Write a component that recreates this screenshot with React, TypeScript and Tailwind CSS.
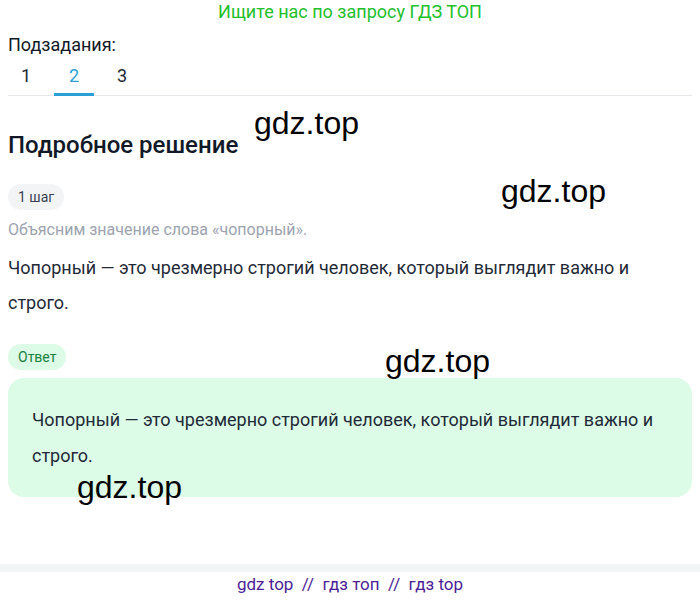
const FONT = "font-['Roboto',sans-serif]";

function Watermark({ className }: { className: string }) {
  return (
    <span className={`pointer-events-none absolute font-['Liberation_Sans',Arial,sans-serif] text-[32px] leading-none text-black ${className}`}>
      gdz.top
    </span>
  );
}

export default function App() {
  const tabs = ["1", "2", "3"];
  const active = "2";

  return (
    <div className={`relative min-h-[600px] w-[700px] bg-white ${FONT}`}>
      {/* Top banner */}
      <p className="text-center text-[18px] leading-[24px] text-[#22c02a]">
        Ищите нас по запросу ГДЗ ТОП
      </p>

      <div className="px-2">
        {/* Subtasks */}
        <p className="mt-[10px] text-[18px] leading-[22px] text-[#111827]">Подзадания:</p>
        <div className="mt-[8px] border-b border-[#e5e7eb]">
          <div className="-ml-[2px] flex gap-[8px]">
            {tabs.map((t) => (
              <button
                key={t}
                type="button"
                className={`w-[40px] pb-[5px] text-center text-[18px] leading-[24px] -mb-px border-b-[3px] ${
                  t === active ? "border-[#2a9fd6] text-[#2a9fd6]" : "border-transparent text-[#1f2937]"
                }`}
              >
                {t}
              </button>
            ))}
          </div>
        </div>

        {/* Title */}
        <h2 className="mt-[34px] text-[24px] font-medium leading-[30px] text-[#111827]">Подробное решение</h2>

        {/* Step */}
        <span className="mt-[24px] inline-block rounded-full bg-[#f3f4f6] px-[10px] py-[4px] text-[14px] leading-[18px] text-[#374151]">
          1 шаг
        </span>
        <p className="mt-[9px] text-[16px] leading-[22px] text-[#9ca3af]">Объясним значение слова «чопорный».</p>
        <p className="mt-[9px] pr-[40px] text-[18px] leading-[35px] text-[#1f2937]">
          Чопорный — это чрезмерно строгий человек, который выглядит важно и строго.
        </p>

        {/* Answer */}
        <span className="mt-[24px] inline-block rounded-full bg-[#dcfce7] px-[10px] py-[4px] text-[14px] leading-[18px] text-[#15803d]">
          Ответ
        </span>
        <div className="mt-[8px] rounded-[16px] bg-[#dcfce7] px-[24px] pt-[24px] pb-[23px]">
          <p className="text-[18px] leading-[36px] text-[#1f2937]">
            Чопорный — это чрезмерно строгий человек, который выглядит важно и строго.
          </p>
        </div>
      </div>

      {/* Footer */}
      <div className="mt-[67px] h-[8px] bg-[#f3f4f6]" />
      <p className="text-center text-[17px] leading-[24px] text-[#4c1d95]">
        gdz top&nbsp; //&nbsp; гдз топ&nbsp; //&nbsp; гдз top
      </p>

      <Watermark className="left-[254px] top-[107px]" />
      <Watermark className="left-[501px] top-[175px]" />
      <Watermark className="left-[385px] top-[345px]" />
      <Watermark className="left-[77px] top-[471px]" />
    </div>
  );
}
